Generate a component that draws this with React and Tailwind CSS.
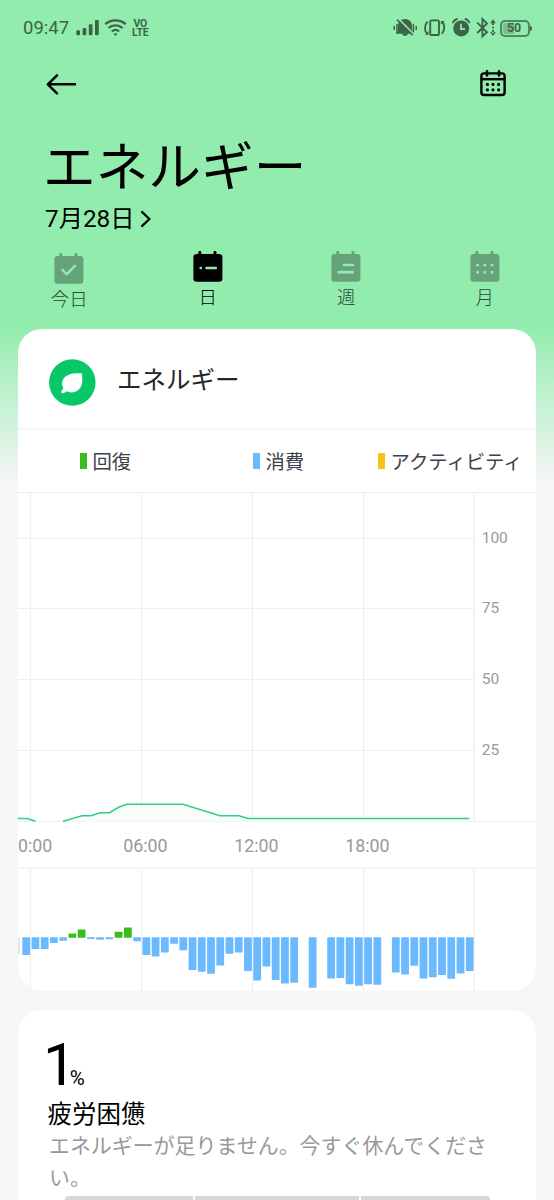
// src/App.jsx
// Energy detail screen

const GRID_X = [30.5, 141.5, 252.5, 363.5];

const SCALE = [
  { label: '100', y: 538.5 },
  { label: '75', y: 608.5 },
  { label: '50', y: 679.5 },
  { label: '25', y: 750.5 },
];

// Balance per half hour, positive values are recovery
const BALANCE = [
  -17.7, -11.7, -11.7, -5.7, -3.5, 4.3, 8.3, -1.7, -2.5, -2, 6, 10.3, -4, -17.7,
  -19.3, -15.3, -6.5, -13, -32.7, -34.5, -36.5, -28.3, -16.5, -15.3, -33.7,
  -43.3, -29.3, -42.7, -46.3, -45.5, 0, -50.5, 0, -41.3, -40.7, -47, -48.5,
  -47, -47.5, 0, -35.3, -37.3, -28.5, -41.3, -40, -37.7, -41.5, -36.3, -33.7,
];

const BASELINE = 937.3;

const Signal = () => (
  <svg className="ml-[7px] h-6 w-[52px]" viewBox="76 16 52 24" fill="#3b6448">
    <rect x="76.3" y="30.2" width="3.7" height="5" rx="1" />
    <rect x="82.6" y="28" width="3.7" height="7.2" rx="1" />
    <rect x="88.8" y="24.2" width="3.7" height="11" rx="1" />
    <rect x="95" y="20" width="3.8" height="15.2" rx="1" />
    <g fill="none" stroke="#3b6448" strokeWidth="2.3">
      <path d="M105.3 24.2c5.8-5.2 14.6-5.2 20.4 0" />
      <path d="M108.5 28c4-3.6 10-3.6 14 0" />
      <path d="M111.8 31.5c2.2-1.9 5.2-1.9 7.4 0" />
    </g>
    <path d="M115.5 36l-2-2.2c1.2-.9 2.8-.9 4 0z" />
  </svg>
);

const StatusIcons = () => (
  <svg className="h-6 w-[106px]" viewBox="392 16 106 24" fill="#3b6448">
    {/* muted bell */}
    <path d="M405 19c4.4 0 7 3 7 6.8v4.4l2 2.6v1h-18v-1l2-2.6v-4.4c0-3.8 2.6-6.8 7-6.8z" />
    <path d="M402 33.6h6c-.4 3.2-5.6 3.2-6 0z" />
    <path d="M397 19.6l15.6 15.6" stroke="#3b6448" strokeWidth="1.6" />
    <path d="M398.4 18.6l15.4 15.4" stroke="#92ecae" strokeWidth="1.6" />
    <path
      d="M394.2 26.6v3M397 24.6v6.6M413.4 24.6v6.6M416.2 26.6v3"
      stroke="#3b6448"
      strokeWidth="1.5"
      strokeLinecap="round"
    />
    {/* vibration */}
    <g fill="none" stroke="#3b6448" strokeWidth="1.9">
      <rect x="430.2" y="20.4" width="8.8" height="14.6" rx="1.6" />
      <path d="M427.6 21.6c-3.4 3.6-3.4 8.8-.6 12.2M441.8 33.8c3.2-3.4 3.2-8.6.6-12.2" />
    </g>
    <path d="M428.6 31v3.8h-3.8zM440.8 24.8V21h3.8z" />
    {/* alarm */}
    <circle cx="461.2" cy="28.4" r="8" />
    <path
      d="M453 22.4c.8-1.6 2-2.6 3.8-3.4M469.4 22.4c-.8-1.6-2-2.6-3.8-3.4"
      fill="none"
      stroke="#3b6448"
      strokeWidth="2"
      strokeLinecap="round"
    />
    <path d="M461 23.8v5.4h4" fill="none" stroke="#92ecae" strokeWidth="1.7" />
    {/* bluetooth */}
    <path
      d="M477.2 22.6l9.8 9.6-4.6 4.2V19l4.6 4.4-9.8 9.6"
      fill="none"
      stroke="#3b6448"
      strokeWidth="1.9"
    />
    <path d="M493 19.2l2.8 4h-5.6zM493 36l2.8-4h-5.6zM492.1 22h1.8v3.2h-1.8zM492.1 30h1.8v3h-1.8zM492.1 26.7h1.8v1.8h-1.8z" />
  </svg>
);

const StatusBar = () => (
  <div className="flex h-14 items-center pl-[23px] pr-[22px] font-[Roboto,sans-serif] text-[#3b6448]">
    <span className="text-[18.5px] leading-6">09:47</span>
    <Signal />
    <div className="ml-[4px] flex flex-col items-center text-[10.5px] font-bold leading-[9.3px] tracking-[-0.2px]">
      <span>VO</span>
      <span>LTE</span>
    </div>
    <div className="ml-auto flex items-center">
      <StatusIcons />
      <div className="ml-[2px] flex h-[17px] w-[30px] items-center rounded-[5px] border-2 border-[#3b6448]/75 p-px">
        <div className="h-full w-[11px] rounded-l-[2px] bg-[#79bd8f]" />
        <span className="-ml-[7px] text-[12.4px] font-bold leading-3">50</span>
      </div>
      <div className="h-[5px] w-[2px] rounded-r-full bg-[#3b6448]" />
    </div>
  </div>
);

const TabIcon = ({ type }) => (
  <svg className="h-[31px] w-[30px]" viewBox="0 0 30 31">
    <path
      d="M6.8 1.4v4M22 1.4v4"
      stroke="currentColor"
      strokeWidth="3"
      strokeLinecap="round"
    />
    <rect x=".4" y="3" width="29" height="27.8" rx="3.2" fill="currentColor" />
    <g
      fill="none"
      stroke="#92ecae"
      strokeWidth="2.7"
      strokeLinecap="round"
      strokeLinejoin="round"
    >
      {type === 'today' && <path d="M8.6 17l4 4.3 8.6-8.6" strokeWidth="2.4" />}
      {type === 'day' && <path d="M7.7 17h.01M13.6 17h9.2" />}
      {type === 'week' && <path d="M13 14h8.8M7.8 21.2h14" />}
      {type === 'month' && (
        <path
          d="M7.6 14h.01M14.8 14h.01M22 14h.01M7.6 21.2h.01M14.8 21.2h.01M22 21.2h.01"
          strokeWidth="3.1"
        />
      )}
    </g>
  </svg>
);

const tabs = [
  { type: 'today', label: '今日' },
  { type: 'day', label: '日' },
  { type: 'week', label: '週' },
  { type: 'month', label: '月' },
];

const Tabs = () => (
  <nav className="grid h-[79px] grid-cols-4">
    {tabs.map((tab) => (
      <button
        key={tab.type}
        className={`flex flex-col items-center ${
          tab.type === 'today' ? 'pt-1' : 'pt-[2px]'
        } ${tab.type === 'day' ? 'text-black' : 'text-[#66a27a]'}`}
      >
        <TabIcon type={tab.type} />
        <span
          className={`mt-[2px] text-[18.4px] font-light leading-7 ${
            tab.type === 'day' ? 'text-black' : 'text-[#2a4634]'
          }`}
        >
          {tab.label}
        </span>
      </button>
    ))}
  </nav>
);

const Header = () => (
  <header>
    <div className="flex h-14 items-center justify-between pl-[46px] pr-[47px]">
      <svg className="h-6 w-[31px]" viewBox="0 0 31 24" fill="none" stroke="#000" strokeWidth="2.5" strokeLinecap="round" strokeLinejoin="round">
        <path d="M11 3.3L1.8 12.3 11 21.3M2 12.3h27" />
      </svg>
      <svg className="h-7 w-7" viewBox="0 0 28 28" fill="none" stroke="#000" strokeWidth="2.4">
        <rect x="2.4" y="3.4" width="23.2" height="21.6" rx="2.6" />
        <path d="M2.4 9.2h23.2" />
        <path d="M8 1.4v4M20 1.4v4" strokeLinecap="round" strokeWidth="2.6" />
        <path
          d="M8.4 14.4h.01M14 14.4h.01M19.6 14.4h.01M8.4 19.8h.01M14 19.8h.01M19.6 19.8h.01"
          strokeLinecap="round"
          strokeWidth="3.2"
        />
      </svg>
    </div>
    <h1 className="mt-[21.5px] pl-[43px] text-[52.7px] leading-[68px]">エネルギー</h1>
    <div className="mt-[0.5px] flex h-[34px] items-center pl-[45px] text-[24.3px] leading-[34px]">
      <span>7月28日</span>
      <svg className="ml-[5px] h-[18px] w-[11px]" viewBox="0 0 11 18" fill="none" stroke="#000" strokeWidth="2.2">
        <path d="M1.4 1.4L9.4 9l-8 7.6" />
      </svg>
    </div>
    <div className="mt-[13px]">
      <Tabs />
    </div>
  </header>
);

const EnergyChart = () => (
  <svg
    className="block h-[500px] w-[518px]"
    viewBox="18 492 518 500"
    fontFamily="Roboto, sans-serif"
  >
    {/* grid */}
    <g stroke="#eeeeee" strokeWidth="1">
      <path d="M18 492.5H536M18 821.5H536" />
      {SCALE.map((row) => (
        <path key={row.label} d={`M18 ${row.y}H474`} />
      ))}
      {GRID_X.map((x) => (
        <path key={x} d={`M${x} 492V821.5M${x} 868V992`} />
      ))}
    </g>
    <path d="M474 492V821.5M474 868V992M18 868H536" stroke="#f5f5f5" strokeWidth="2" />

    {/* axis labels */}
    <g fill="#999999">
      {SCALE.map((row) => (
        <text key={row.label} x="481.7" y={row.y + 4.8} fontSize="15.5">
          {row.label}
        </text>
      ))}
      <g fontSize="17.8">
        <text x="8" y="852">00:00</text>
        <text x="123.3" y="852">06:00</text>
        <text x="234.3" y="852">12:00</text>
        <text x="345.2" y="852">18:00</text>
      </g>
    </g>

    {/* energy level */}
    <path
      d="M63 821.5L82 815.7H91L100 812.7H109.5L119 807L127 804.2H183L220 815.7H239L248 818.5H469V821.5Z"
      fill="#f8fdfa"
    />
    <path
      d="M18 818.5H27L35.5 821.3M63 821.3L82 815.7H91L100 812.7H109.5L119 807L127 804.2H183L220 815.7H239L248 818.5H469.3"
      fill="none"
      stroke="#2ed083"
      strokeWidth="1.5"
    />

    {/* balance bars */}
    <rect x="18" y={BASELINE + 0.5} width="2.3" height="16.5" fill="#e6e6e6" />
    {BALANCE.map((value, i) => (
      <rect
        key={i}
        x={22.3 + i * 9.24}
        y={value > 0 ? BASELINE + 0.4 - value : BASELINE}
        width="7.8"
        height={Math.abs(value)}
        rx="0.6"
        fill={value > 0 ? '#37bd1e' : '#6bb9ff'}
      />
    ))}
  </svg>
);

const Legend = () => (
  <div className="flex h-[62px] items-center text-[19.35px] leading-7 text-[#3b424b]">
    <div className="flex w-[173px] items-center pl-[62px]">
      <i className="mr-[6px] h-4 w-[6.5px] bg-[#37bd1e]" />
      <span className="pt-[3px]">回復</span>
    </div>
    <div className="flex w-[125px] items-center pl-[62px]">
      <i className="mr-[6px] h-4 w-[6.5px] shrink-0 bg-[#6bb9ff]" />
      <span className="whitespace-nowrap pt-[3px]">消費</span>
    </div>
    <div className="flex items-center whitespace-nowrap pl-[62px]">
      <i className="mr-[6px] h-4 w-[6.5px] shrink-0 bg-[#f6c31c]" />
      <span className="pt-[3px]">アクティビティ</span>
    </div>
  </div>
);

const EnergyCard = () => (
  <section className="ml-[18px] h-[662px] w-[518px] overflow-hidden rounded-[24px] bg-white">
    <div className="flex h-[101px] items-center border-b-2 border-[#f7f7f7] pl-[31px] pt-[8px]">
      <svg className="h-[47px] w-[47px]" viewBox="0 0 47 47">
        <circle cx="23.3" cy="23.5" r="23.2" fill="#07c767" />
        <path
          d="M31.6 14.2c.9 0 1.3.4 1.4 1.2.5 5 .6 9-1.2 12.6-2.8 5.2-8.8 6.8-13.6 4.2l-3.4 1.9c-1.9 1.1-3.5-.9-2.2-2.3l1.9-2.5c-2.4-4.2-1.6-8.6 2-11.7 3.9-3.3 9.4-3.5 15.1-3.4z"
          fill="#fff"
        />
      </svg>
      <h2 className="-mt-[3px] ml-[21px] text-[24.5px] leading-9 text-[#262626]">エネルギー</h2>
    </div>
    <Legend />
    <EnergyChart />
  </section>
);

const SummaryCard = () => (
  <section className="ml-[18px] mt-[19px] h-[300px] w-[518px] rounded-[24px] bg-white pl-[29.5px] pt-[25px]">
    <div className="flex h-[60px] items-baseline leading-[60px]">
      <span className="-ml-[4.5px] text-[59px]">1</span>
      <span className="-ml-[6.5px] text-[20.5px]">%</span>
    </div>
    <h3 className="mt-[2px] text-[24.5px] leading-9">疲労困憊</h3>
    <p className="-mt-[3px] ml-[1.5px] w-[452px] text-[20.95px] leading-8 text-[#999999]">
      エネルギーが足りません。今すぐ休んでください。
    </p>
    <div className="ml-[17px] mt-[2px] flex h-[6px] w-[425px] gap-[2px]">
      <div className="w-[128.5px] rounded-l-full bg-[#d8d8d8]" />
      <div className="w-[164px] bg-[#d8d8d8]" />
      <div className="flex-1 rounded-r-full bg-[#d8d8d8]" />
    </div>
  </section>
);

const App = () => {
  return (
    <div
      lang="ja"
      className="h-[1200px] w-[554px] overflow-hidden bg-[#f6f6f6] bg-[linear-gradient(#92ecae_325px,#f6f6f6_482px)] font-[Roboto,'Noto_Sans_CJK_JP',sans-serif] text-black"
    >
      <StatusBar />
      <Header />
      <main className="pt-px">
        <EnergyCard />
        <SummaryCard />
      </main>
    </div>
  );
};

export default App;
